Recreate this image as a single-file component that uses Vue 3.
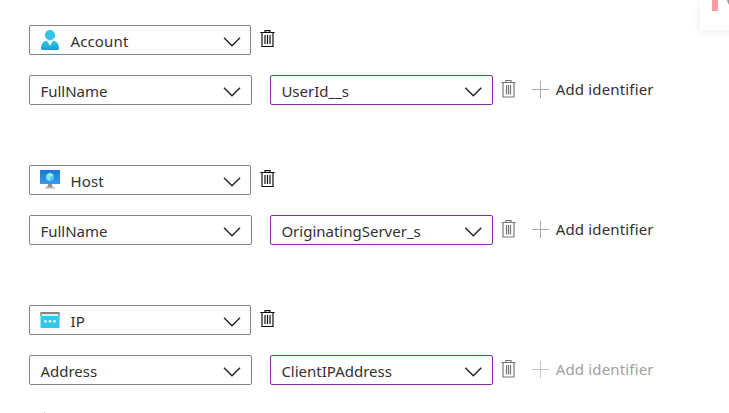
<script setup>
const groups = [
  { icon: 'account', name: 'Account', identifier: 'FullName', value: 'UserId__s', disabled: false },
  { icon: 'host', name: 'Host', identifier: 'FullName', value: 'OriginatingServer_s', disabled: false },
  { icon: 'ip', name: 'IP', identifier: 'Address', value: 'ClientIPAddress', disabled: true },
]
</script>

<template>
  <main class="panel">
    <section v-for="group in groups" :key="group.name" class="entity">
      <div class="row">
        <div class="select entity-select">
          <svg v-if="group.icon === 'account'" class="entity-icon" viewBox="0 0 20 22">
            <defs>
              <linearGradient id="person" x1="0" y1="0" x2="0" y2="1">
                <stop offset="0" stop-color="#32c8e8" />
                <stop offset="1" stop-color="#1b9fce" />
              </linearGradient>
            </defs>
            <path d="M1 18.900C1.300 15 3 12.300 6 11.800h8c3 .5 4.700 3.200 5 7.100.1 1.300-.7 2.100-1.800 2.100H2.800c-1.100 0-1.900-.8-1.800-2.100Z" fill="url(#person)" />
            <path d="M7 11.800h6l-3 5.200Z" fill="#eafaff" />
            <circle cx="10" cy="6.100" r="5.100" fill="#32c5e4" />
          </svg>
          <svg v-else-if="group.icon === 'host'" class="entity-icon" viewBox="0 0 20 22">
            <defs>
              <linearGradient id="screen" x1="0" y1="0" x2="0" y2="1">
                <stop offset="0" stop-color="#1679d3" />
                <stop offset="1" stop-color="#3b9aee" />
              </linearGradient>
            </defs>
            <rect x="0" y="1" width="20" height="14" rx=".5" fill="url(#screen)" />
            <path d="M8 15h4c0 1.700.5 2.700 2.600 3.900H5.400C7.500 17.700 8 16.700 8 15Z" fill="#929292" />
            <path d="M5.400 18.300h9.200l.2 1.400H5.200Z" fill="#c4c4c4" />
            <path d="m10 3.800 3.700 2.100v4.300L10 12.300l-3.700-2.100V5.900Z" fill="#55cdef" />
            <path d="m10 3.800 3.700 2.100L10 8 6.300 5.900Z" fill="#9deaff" />
            <path d="M6.300 5.900 10 8v4.300l-3.700-2.100Z" fill="#84e2f8" />
          </svg>
          <svg v-else class="entity-icon" viewBox="0 0 20 22">
            <rect x="0.500" y="4" width="19" height="15" rx=".5" fill="#32c8e9" />
            <path d="M.9 3h18.200l.6.600V7H.3V3.600Z" fill="#858585" />
            <rect x="1.500" y="5" width="17" height="2" fill="#e6e6e6" />
            <g fill="#e9fbff">
              <circle cx="5.500" cy="12.300" r="1.400" />
              <circle cx="10" cy="12.300" r="1.400" />
              <circle cx="14.500" cy="12.300" r="1.400" />
            </g>
          </svg>
          <span class="text">{{ group.name }}</span>
          <svg class="chevron" viewBox="0 0 18 10"><path d="m1 .7 8 8 8-8" /></svg>
        </div>
        <svg class="trash" viewBox="0 0 15 18">
          <path d="M.3 2.500h14.400M5 2.500v-1.900h5v1.900M2 2.500v14h11v-14M5 5v9M7.500 5v9M10 5v9" />
        </svg>
      </div>
      <div class="row mapping">
        <div class="select">
          <span class="text">{{ group.identifier }}</span>
          <svg class="chevron" viewBox="0 0 18 10"><path d="m1 .7 8 8 8-8" /></svg>
        </div>
        <div class="select value">
          <span class="text">{{ group.value }}</span>
          <svg class="chevron" viewBox="0 0 18 10"><path d="m1.300 .7 8 8 8-8" /></svg>
        </div>
        <svg class="trash muted" viewBox="0 0 15 19">
          <path d="M.5 3.500h14M5 3.500v-2h5v2M2 3.500v14.500h11v-14.500M5.500 6v9.500M7.500 6v9.500M9.500 6v9.500" />
        </svg>
        <div class="add" :class="{ disabled: group.disabled }">
          <svg class="plus" viewBox="0 0 17 17"><path d="M0 8.500h17M8.500 0v17" /></svg>
          <span class="text">Add identifier</span>
        </div>
      </div>
    </section>
    <aside class="flyout">
      <i class="bar"></i>
      <svg class="edge" viewBox="0 0 3 6"><path d="M0 0h3v6Q1 4 0 0Z" /></svg>
    </aside>
    <i class="speck"></i>
  </main>
</template>

<style>
html,
body {
  margin: 0;
  background: #fff;
}
</style>

<style scoped>
.panel {
  position: relative;
  box-sizing: border-box;
  width: 729px;
  height: 413px;
  padding: 25px 0 0 29px;
  overflow: hidden;
  background: #fff;
  color: #323130;
  font: 15px/20px "Noto Sans", "Open Sans", sans-serif;
}
.entity {
  height: 140px;
}
.row {
  display: flex;
  align-items: flex-start;
  height: 30px;
}
.mapping {
  margin-top: 20px;
}
.select {
  box-sizing: border-box;
  display: flex;
  align-items: center;
  width: 223px;
  height: 30px;
  padding: 0 10px 0 10.4px;
  border: 1px solid #85827f;
  border-radius: 2px;
}
.entity-select {
  width: 222px;
  padding: 0 9px 0 10px;
}
.value {
  margin-left: 18px;
  border-color: #8a2da5;
}
.entity-icon {
  width: 20px;
  height: 22px;
  margin-right: 10.4px;
}
.text {
  white-space: pre;
  font-size: 15px;
  padding-top: 2px;
}
.entity-select .text {
  letter-spacing: 0.15px;
}
.chevron {
  width: 18px;
  height: 10px;
  margin: 3px 0 0 auto;
}
.chevron path {
  fill: none;
  stroke: #222;
  stroke-width: 1.4;
}
.trash {
  width: 15px;
  height: 18px;
  margin: 5px 0 0 9px;
  fill: none;
  stroke: #111;
  stroke-width: 1.2;
}
.muted {
  height: 19px;
  margin: 4px 0 0 8px;
  stroke: #777;
}
.add {
  display: flex;
  align-items: center;
  height: 28px;
  margin-left: 16px;
}
.add .text {
  margin-left: 6.7px;
  padding: 0;
  letter-spacing: 0.16px;
}
.plus {
  width: 17px;
  height: 17px;
  fill: none;
  stroke: #aaa;
  stroke-width: 1;
}
.disabled {
  color: #a19f9d;
}
.disabled .plus {
  stroke: #c4c4c4;
}
.flyout {
  position: absolute;
  top: 0;
  left: 700px;
  display: flex;
  box-sizing: border-box;
  width: 50px;
  height: 30px;
  padding-left: 12px;
  background: #fff;
  box-shadow: 0 2px 10px rgba(0, 0, 0, 0.07);
}
.bar {
  width: 6px;
  height: 11px;
  background: #f79ba5;
}
.edge {
  width: 3px;
  height: 6px;
  margin-left: 9px;
  fill: #999;
}
.speck {
  position: absolute;
  top: 412px;
  left: 44px;
  width: 1px;
  height: 1px;
  background: #bbb;
}
</style>
